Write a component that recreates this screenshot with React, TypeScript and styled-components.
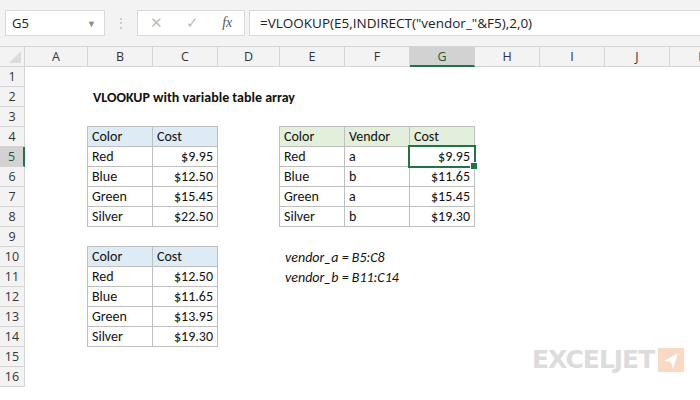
import styled, { createGlobalStyle } from "styled-components"

const Global = createGlobalStyle`
  body { margin: 0; background: #fff; font-family: Calibri, Carlito, "Open Sans", sans-serif; }
`

const cols = ["A", "B", "C", "D", "E", "F", "G", "H", "I", "J", "K"]
const widths = [63, 65, 65, 62, 65, 65, 65, 65, 65, 65, 65]
const template = `25px ${widths.map((w) => w + "px").join(" ")}`

const Page = styled.div`
  position: relative;
  width: 700px;
  height: 400px;
  overflow: hidden;
  background: #fff;
`

const Toolbar = styled.div`
  height: 47px;
  background: #f3f3f3;
  display: flex;
  align-items: center;
  padding: 0 0 0 5px;
  border-bottom: 1px solid #d4d4d4;
  box-sizing: border-box;
`

const NameBox = styled.div`
  width: 100px;
  height: 26px;
  background: #fff;
  border: 1px solid #dadada;
  box-sizing: border-box;
  display: flex;
  align-items: center;
  justify-content: space-between;
  padding: 0 8px 0 6px;
  font-family: "Segoe UI", "Open Sans", sans-serif;
  font-size: 13px;
  color: #222;
`

const Arrow = styled.span`
  color: #888;
  font-size: 9px;
`

const Dots = styled.div`
  width: 32px;
  text-align: center;
  color: #b8b8b8;
  font-size: 12px;
`

const IconBox = styled.div`
  width: 108px;
  height: 26px;
  background: #fff;
  border: 1px solid #dadada;
  box-sizing: border-box;
  display: flex;
  align-items: center;
  justify-content: space-around;
  color: #bbb;
  font-size: 15px;
`

const Fx = styled.span`
  font-family: "Liberation Serif", serif;
  font-style: italic;
  color: #555;
  font-size: 14px;
`

const Formula = styled.div`
  flex: 1;
  height: 26px;
  margin-left: 4px;
  background: #fff;
  border: 1px solid #dadada;
  border-right: none;
  box-sizing: border-box;
  display: flex;
  align-items: center;
  padding-left: 10px;
  font-family: "Segoe UI", "Open Sans", sans-serif;
  font-size: 13.5px;
  color: #222;
  white-space: nowrap;
  overflow: hidden;
`

const Grid = styled.div`
  display: grid;
  grid-template-columns: ${template};
  grid-auto-rows: 20px;
`

const ColHead = styled.div<{ $sel?: boolean }>`
  height: 20px;
  background: ${(p) => (p.$sel ? "#d2d2d2" : "#f3f3f3")};
  border-right: 1px solid #d4d4d4;
  border-bottom: ${(p) => (p.$sel ? "2px solid #217346" : "1px solid #d4d4d4")};
  box-sizing: border-box;
  display: flex;
  align-items: center;
  justify-content: center;
  font-family: "Segoe UI", "Open Sans", sans-serif;
  font-size: 12.5px;
  color: ${(p) => (p.$sel ? "#1d5c38" : "#333")};
`

const RowHead = styled(ColHead)<{ $sel?: boolean }>`
  border-bottom: 1px solid #d4d4d4;
  border-right: ${(p) => (p.$sel ? "2px solid #217346" : "1px solid #d4d4d4")};
`

const Corner = styled.div`
  background: #f3f3f3;
  border-right: 1px solid #d4d4d4;
  border-bottom: 1px solid #d4d4d4;
  position: relative;
  &::after {
    content: "";
    position: absolute;
    right: 3px;
    bottom: 3px;
    border-left: 12px solid transparent;
    border-bottom: 12px solid #dcdcdc;
  }
`

const Cell = styled.div<{ $b?: boolean; $fill?: string; $right?: boolean; $bold?: boolean; $italic?: boolean; $sel?: boolean }>`
  position: relative;
  box-sizing: border-box;
  background: ${(p) => p.$fill || (p.$b ? "#fff" : "transparent")};
  border: 1px solid ${(p) => (p.$b ? "#bfbfbf" : "transparent")};
  margin-left: ${(p) => (p.$b ? "-1px" : "0")};
  margin-top: ${(p) => (p.$b ? "-1px" : "0")};
  padding: 0 4px;
  display: flex;
  align-items: center;
  justify-content: ${(p) => (p.$right ? "flex-end" : "flex-start")};
  font-size: 14px;
  font-weight: ${(p) => (p.$bold ? 700 : 400)};
  font-style: ${(p) => (p.$italic ? "italic" : "normal")};
  color: #111;
  white-space: nowrap;
  overflow: visible;
  ${(p) => p.$sel && "outline: 2px solid #217346; outline-offset: -1px; z-index: 2;"}
`

const Handle = styled.span`
  position: absolute;
  right: -4px;
  bottom: -4px;
  width: 6px;
  height: 6px;
  background: #217346;
  border: 1px solid #fff;
`

const Logo = styled.div`
  position: absolute;
  left: 532px;
  top: 345px;
  display: flex;
  align-items: center;
  gap: 4px;
  font-family: "DejaVu Sans", sans-serif;
  font-weight: 900;
  font-size: 25px;
  letter-spacing: -1px;
  color: #dcdcdc;
`

type C = { t: string; b?: boolean; fill?: string; right?: boolean; bold?: boolean; italic?: boolean; sel?: boolean }
const blue = "#ddebf7"
const green = "#e2efda"
const data: Record<number, Record<string, C>> = {
  2: { B: { t: "VLOOKUP with variable table array", bold: true } },
  4: {
    B: { t: "Color", b: true, fill: blue }, C: { t: "Cost", b: true, fill: blue },
    E: { t: "Color", b: true, fill: green }, F: { t: "Vendor", b: true, fill: green }, G: { t: "Cost", b: true, fill: green },
  },
  10: { B: { t: "Color", b: true, fill: blue }, C: { t: "Cost", b: true, fill: blue }, E: { t: "vendor_a = B5:C8", italic: true } },
  11: { E: { t: "vendor_b = B11:C14", italic: true } },
}
const t1 = [["Red", "$9.95"], ["Blue", "$12.50"], ["Green", "$15.45"], ["Silver", "$22.50"]]
const t2 = [["Red", "$12.50"], ["Blue", "$11.65"], ["Green", "$13.95"], ["Silver", "$19.30"]]
const t3 = [["Red", "a", "$9.95"], ["Blue", "b", "$11.65"], ["Green", "a", "$15.45"], ["Silver", "b", "$19.30"]]
t1.forEach(([c, v], i) => {
  data[5 + i] = { ...(data[5 + i] || {}), B: { t: c, b: true }, C: { t: v, b: true, right: true } }
})
t3.forEach(([c, v, p], i) => {
  data[5 + i] = { ...data[5 + i], E: { t: c, b: true }, F: { t: v, b: true }, G: { t: p, b: true, right: true, sel: i === 0 } }
})
t2.forEach(([c, v], i) => {
  data[11 + i] = { ...(data[11 + i] || {}), B: { t: c, b: true }, C: { t: v, b: true, right: true } }
})

export default function App() {
  const rows = Array.from({ length: 16 }, (_, i) => i + 1)
  return (
    <Page>
      <Global />
      <Toolbar>
        <NameBox>
          <span>G5</span>
          <Arrow>▼</Arrow>
        </NameBox>
        <Dots>⋮</Dots>
        <IconBox>
          <span>✕</span>
          <span>✓</span>
          <Fx>fx</Fx>
        </IconBox>
        <Formula>=VLOOKUP(E5,INDIRECT("vendor_"&amp;F5),2,0)</Formula>
      </Toolbar>
      <Grid>
        <Corner />
        {cols.map((c) => (
          <ColHead key={c} $sel={c === "G"}>{c}</ColHead>
        ))}
        {rows.map((r) => [
          <RowHead key={`h${r}`} $sel={r === 5}>{r}</RowHead>,
          ...cols.map((c) => {
            const d = data[r]?.[c]
            return (
              <Cell key={`${c}${r}`} $b={d?.b} $fill={d?.fill} $right={d?.right} $bold={d?.bold} $italic={d?.italic} $sel={d?.sel}>
                {d?.t}
                {d?.sel && <Handle />}
              </Cell>
            )
          }),
        ])}
      </Grid>
      <Logo>
        EXCELJET
        <svg width="26" height="24" viewBox="0 0 26 24">
          <rect width="26" height="24" fill="#f9d9c2" />
          <path d="M20 5 L6 13 L13 14 L15 21 Z" fill="#fff" />
        </svg>
      </Logo>
    </Page>
  )
}
